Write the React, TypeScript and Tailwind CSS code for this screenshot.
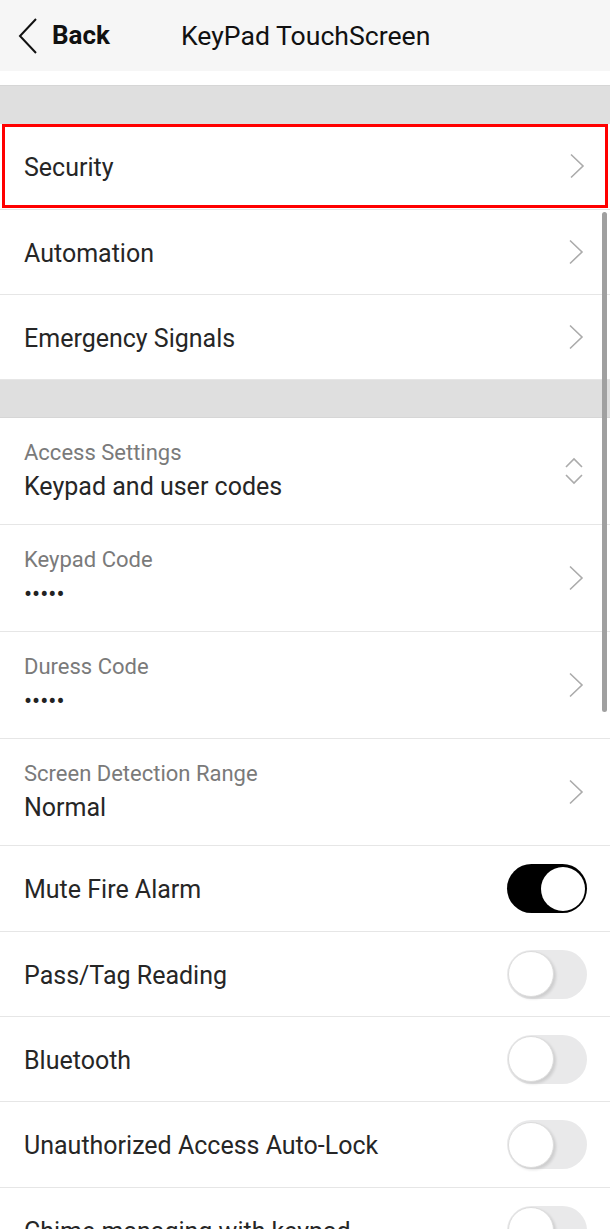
import React from "react";

type Row =
  | { kind: "detail"; label: string; value: string; icon: "chevron" | "updown" }
  | { kind: "toggle"; title: string; on: boolean; tall?: boolean };

const groupTwo: Row[] = [
  { kind: "detail", label: "Access Settings", value: "Keypad and user codes", icon: "updown" },
  { kind: "detail", label: "Keypad Code", value: "•••••", icon: "chevron" },
  { kind: "detail", label: "Duress Code", value: "•••••", icon: "chevron" },
  { kind: "detail", label: "Screen Detection Range", value: "Normal", icon: "chevron" },
  { kind: "toggle", title: "Mute Fire Alarm", on: true, tall: true },
  { kind: "toggle", title: "Pass/Tag Reading", on: false },
  { kind: "toggle", title: "Bluetooth", on: false },
  { kind: "toggle", title: "Unauthorized Access Auto-Lock", on: false, tall: true },
  { kind: "toggle", title: "Chime managing with keypad", on: false },
];

function Chevron() {
  return (
    <svg width="16" height="26" viewBox="0 0 16 26" fill="none">
      <path d="M2 1.5 L14 13 L2 24.5" stroke="#ababab" strokeWidth="1.6" />
    </svg>
  );
}

function UpDown() {
  return (
    <svg width="20" height="28" viewBox="0 0 20 28" fill="none">
      <path d="M2 10 L10 2 L18 10" stroke="#ababab" strokeWidth="1.6" />
      <path d="M2 18 L10 26 L18 18" stroke="#ababab" strokeWidth="1.6" />
    </svg>
  );
}

function Toggle({ on }: { on: boolean }) {
  if (on) {
    return (
      <div className="w-[80px] h-[49px] rounded-full bg-black flex items-center justify-end pr-[2px]">
        <div className="w-[44px] h-[44px] rounded-full bg-white" />
      </div>
    );
  }
  return (
    <div className="w-[80px] h-[49px] rounded-full bg-[#e9e9ea] flex items-center pl-[1px]">
      <div className="w-[46px] h-[46px] rounded-full bg-white border border-[#dcdcdc] shadow-[2px_2px_3px_rgba(0,0,0,0.12)]" />
    </div>
  );
}

function SimpleRow({ title }: { title: string }) {
  return (
    <div className="h-[85px] flex items-center justify-between pl-[24px] pr-[26px] border-b border-[#e6e6e6] bg-white">
      <span className="text-[25px] text-[#262626] pt-[3px]">{title}</span>
      <Chevron />
    </div>
  );
}

export default function App() {
  return (
    <div
      className="relative w-[610px] h-[1229px] overflow-hidden bg-white"
      style={{ fontFamily: "Roboto, 'Noto Sans', sans-serif" }}
    >
      {/* header */}
      <div className="h-[71px] bg-[#f6f6f6] flex items-center">
        <svg width="24" height="38" viewBox="0 0 24 38" className="ml-[16px]" fill="none">
          <path d="M20 2 L4 19 L20 36" stroke="#111" strokeWidth="2" />
        </svg>
        <span className="ml-[12px] text-[26px] font-bold text-[#111]">Back</span>
        <span className="ml-[71px] text-[26.6px] text-[#111]">KeyPad TouchScreen</span>
      </div>
      <div className="h-[14px] bg-white" />
      <div className="h-[39px] bg-[#dfdfdf] border-t border-[#d6d6d6]" />

      {/* group one */}
      <div className="mx-[2px] h-[84px] border-[3px] border-[#ff0000] flex items-center justify-between pl-[19px] pr-[20px]">
        <span className="text-[25px] text-[#262626] pt-[3px]">Security</span>
        <Chevron />
      </div>
      <div className="h-[2px] border-b border-[#e6e6e6]" />
      <SimpleRow title="Automation" />
      <SimpleRow title="Emergency Signals" />
      <div className="h-[38px] bg-[#dfdfdf] border-b border-[#d6d6d6]" />

      {/* group two */}
      {groupTwo.map((row, i) => {
        if (row.kind === "detail") {
          return (
            <div
              key={i}
              className="flex items-center justify-between pl-[24px] pr-[26px] py-[21px] border-b border-[#e6e6e6]"
            >
              <div className="flex flex-col">
                <span className="h-[28px] leading-[28px] text-[22px] text-[#7a7a7a]">{row.label}</span>
                {row.value === "•••••" ? (
                  <span className="mt-[4px] h-[32px] leading-[32px] text-[24px] text-[#222]">
                    {row.value}
                  </span>
                ) : (
                  <span className="mt-[4px] h-[32px] leading-[32px] text-[25px] text-[#262626]">{row.value}</span>
                )}
              </div>
              {row.icon === "updown" ? <UpDown /> : <Chevron />}
            </div>
          );
        }
        return (
          <div
            key={i}
            className={
              row.tall
                ? "h-[86px] flex items-center justify-between pl-[24px] pr-[23px] border-b border-[#e6e6e6]"
                : "h-[85px] flex items-center justify-between pl-[24px] pr-[23px] border-b border-[#e6e6e6]"
            }
          >
            <span className="text-[25px] text-[#262626] pt-[3px]">{row.title}</span>
            <Toggle on={row.on} />
          </div>
        );
      })}

      {/* scrollbar */}
      <div className="absolute left-[602px] top-[212px] w-[5px] h-[500px] rounded-full bg-[#a0a0a0]" />
    </div>
  );
}
